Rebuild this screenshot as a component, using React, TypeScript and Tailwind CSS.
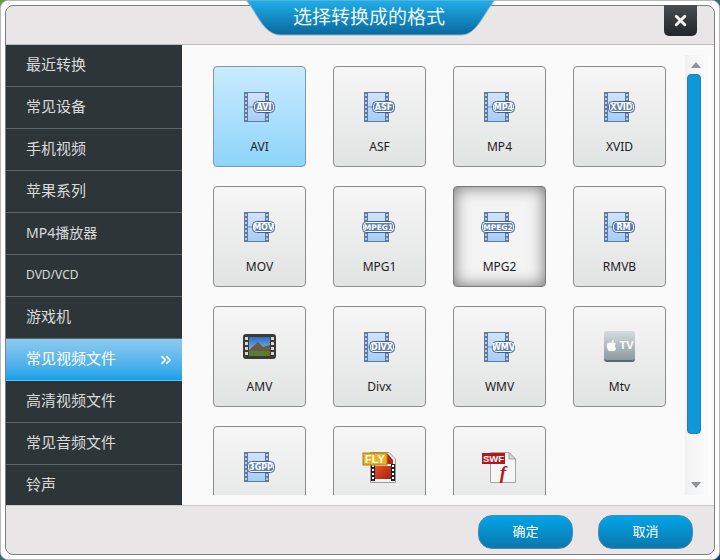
import { ChevronsRight, X } from 'lucide-react'
import { FaApple } from 'react-icons/fa'
import type { ReactNode } from 'react'

const categories = [
  '最近转换',
  '常见设备',
  '手机视频',
  '苹果系列',
  'MP4播放器',
  'DVD/VCD',
  '游戏机',
  '常见视频文件',
  '高清视频文件',
  '常见音频文件',
  '铃声',
]

// badge width comes from the picture, tag is what's printed on the film icon
function FilmIcon({ tag, width }: { tag: string; width: number }) {
  const x = 35 - width
  const holes = [2, 6, 10, 14, 18, 22, 26]
  return (
    <svg width="40" height="32" viewBox="0 0 40 32">
      <defs>
        <linearGradient id="film" x1="0" y1="0" x2="0" y2="1">
          <stop offset="0" stopColor="#d3e3fa" />
          <stop offset="1" stopColor="#a6cdf6" />
        </linearGradient>
      </defs>
      <rect x="4" y="1" width="25" height="30" fill="#5f7ba3" />
      <rect x="8" y="2" width="17" height="28" fill="url(#film)" />
      <line x1="8" y1="16" x2="25" y2="16" stroke="#6f8fbd" />
      {holes.map((y) => (
        <g key={y} fill="#b9c9e0">
          <rect x="5" y={y + 1} width="2" height="2" />
          <rect x="26" y={y + 1} width="2" height="2" />
        </g>
      ))}
      <rect x={x + 0.5} y="10.5" width={width - 1} height="11" rx="4" fill="#fff" stroke="#3f6199" />
      <rect x={x + 2} y="12" width={width - 4} height="8" rx="2.5" fill="#5f7fb3" />
      <text
        x={x + width / 2}
        y="19"
        textAnchor="middle"
        fontSize={tag.length > 4 ? 7.5 : 8}
        fontWeight="700"
        fill="#fff"
        className="font-['DejaVu_Sans',sans-serif]"
      >
        {tag}
      </text>
    </svg>
  )
}

function AmvIcon() {
  const holes = [6, 11, 16, 21]
  return (
    <svg width="40" height="32" viewBox="0 0 40 32">
      <defs>
        <linearGradient id="sky" x1="0" y1="0" x2="0" y2="1">
          <stop offset="0" stopColor="#2a6fc0" />
          <stop offset="1" stopColor="#a9d0ea" />
        </linearGradient>
      </defs>
      <rect x="3" y="3" width="33" height="25" rx="3" fill="#3d3a35" />
      <rect x="9" y="6" width="21" height="19" fill="url(#sky)" />
      <path d="M9 19 L18 11 L23 16 L30 14 V20 H9 Z" fill="#6a5a48" />
      <rect x="9" y="20" width="21" height="5" fill="#5b7d32" />
      {holes.map((y) => (
        <g key={y} fill="#d8d8d8">
          <rect x="5" y={y} width="3" height="3" />
          <rect x="31" y={y} width="3" height="3" />
        </g>
      ))}
    </svg>
  )
}

function FlvIcon() {
  return (
    <svg width="40" height="32" viewBox="0 0 40 32">
      <defs>
        <linearGradient id="flv" x1="0" y1="0" x2="1" y2="1">
          <stop offset="0" stopColor="#e8552c" />
          <stop offset="1" stopColor="#a81e10" />
        </linearGradient>
      </defs>
      <path d="M10.5 1.5 H29 L35.5 8 V31.5 H10.5 Z" fill="#f4f4f4" stroke="#9a9a9a" />
      <path d="M14 3 H28 L33 9 V13 H14 Z" fill="#b8261a" />
      <rect x="15" y="15" width="16" height="13" fill="url(#flv)" />
      <rect x="11" y="13" width="4" height="17" fill="#222" />
      <rect x="31" y="13" width="4" height="17" fill="#222" />
      {[14, 18, 22, 26].map((y) => (
        <g key={y} fill="#fff">
          <rect x="12" y={y} width="2" height="2" />
          <rect x="32" y={y} width="2" height="2" />
        </g>
      ))}
      <rect x="3" y="2" width="24" height="12" fill="#eab21c" stroke="#b07d10" />
      <text x="15" y="12" textAnchor="middle" fontSize="11" fontWeight="700" fill="#fff" className="font-['Liberation_Sans',sans-serif]">
        FLY
      </text>
    </svg>
  )
}

function SwfIcon() {
  return (
    <svg width="40" height="32" viewBox="0 0 40 32">
      <path d="M10.5 1.5 H29 L35.5 8 V31.5 H10.5 Z" fill="#f6f6f6" stroke="#a5a5a5" />
      <path d="M29 1.5 V8 H35.5 Z" fill="#d8d8d8" stroke="#a5a5a5" />
      <rect x="2" y="2" width="23" height="11" fill="#b4161e" />
      <text x="13.5" y="11" textAnchor="middle" fontSize="9.5" fontWeight="700" fill="#fff" className="font-['Liberation_Sans',sans-serif]">
        SWF
      </text>
      <text x="23" y="28" textAnchor="middle" fontSize="19" fontWeight="700" fontStyle="italic" fill="#b4161e" className="font-['Liberation_Serif',serif]">
        f
      </text>
    </svg>
  )
}

function AppleTvIcon() {
  return (
    <div className="flex h-[32px] w-[40px] justify-center">
      <div className="flex h-[31px] w-[31px] items-center justify-center gap-px rounded-[3px] border-b-2 border-[#5c6a70] bg-gradient-to-b from-[#d6dcdf] to-[#8c9aa0] text-white">
        <FaApple className="h-[13px] w-[13px]" />
        <span className="font-['Liberation_Sans',sans-serif] text-[11px] font-bold">TV</span>
      </div>
    </div>
  )
}

// the last row is cut off by the panel before its captions start
const formats: { id: string; label?: string; icon: ReactNode; state?: 'selected' | 'hover' }[] = [
  { id: 'avi', label: 'AVI', icon: <FilmIcon tag="AVI" width={22} />, state: 'selected' },
  { id: 'asf', label: 'ASF', icon: <FilmIcon tag="ASF" width={23} /> },
  { id: 'mp4', label: 'MP4', icon: <FilmIcon tag="MP4" width={23} /> },
  { id: 'xvid', label: 'XVID', icon: <FilmIcon tag="XVID" width={27} /> },
  { id: 'mov', label: 'MOV', icon: <FilmIcon tag="MOV" width={23} /> },
  { id: 'mpg1', label: 'MPG1', icon: <FilmIcon tag="MPEG1" width={33} /> },
  { id: 'mpg2', label: 'MPG2', icon: <FilmIcon tag="MPEG2" width={34} />, state: 'hover' },
  { id: 'rmvb', label: 'RMVB', icon: <FilmIcon tag="RM" width={23} /> },
  { id: 'amv', label: 'AMV', icon: <AmvIcon /> },
  { id: 'divx', label: 'Divx', icon: <FilmIcon tag="DIVX" width={26} /> },
  { id: 'wmv', label: 'WMV', icon: <FilmIcon tag="WMV" width={23} /> },
  { id: 'mtv', label: 'Mtv', icon: <AppleTvIcon /> },
  { id: '3gp', icon: <FilmIcon tag="3GPP" width={28} /> },
  { id: 'flv', icon: <FlvIcon /> },
  { id: 'swf', icon: <SwfIcon /> },
]

function FormatTile({ label, icon, state }: (typeof formats)[number]) {
  let look = 'border-[#8c8c8c] bg-gradient-to-b from-[#f6f6f6] to-[#e2e3e3]'
  if (state === 'selected') look = 'border-[#7d98ab] bg-gradient-to-b from-[#c9ebfe] to-[#8dd4fa]'
  if (state === 'hover') look = 'border-[#777777] bg-[#f4f4f4] shadow-[inset_0_0_16px_#6f6f6f]'
  return (
    <div className={`flex h-[101px] w-[93px] flex-col items-center rounded-[4px] border pt-[24px] ${look}`}>
      {icon}
      {label && <span className="mt-[16px] text-[12px] leading-[16px] text-[#1c1c1c]">{label}</span>}
    </div>
  )
}

function Scrollbar() {
  return (
    <div className="mt-[10px] flex w-[26px] flex-col bg-gradient-to-r from-[#f1f1f1] to-[#fdfdfd] pl-[2px]">
      <div className="mt-[7px] ml-[4px] h-0 w-0 border-x-[5px] border-b-[6px] border-x-transparent border-b-[#8f9498]" />
      <div className="mt-[6px] h-[360px] w-[14px] rounded-[4px] border border-[#2b7cad] bg-[#0f98d9]" />
      <div className="mt-[48px] ml-[4px] h-0 w-0 border-x-[5px] border-t-[6px] border-x-transparent border-t-[#8f9498]" />
    </div>
  )
}

function rowTextSize(name: string) {
  if (name === 'DVD/VCD') return 'text-[12px]'
  if (name === 'MP4播放器') return 'text-[14px]'
  return 'text-[15px]'
}

export default function App() {
  return (
    <div className="h-[560px] w-[720px] bg-gradient-to-br from-[#6d9a3a] to-[#123a7a] font-['Noto_Sans','Noto_Sans_CJK_SC',sans-serif]">
      <div className="relative h-full w-full rounded-[8px] border border-[#b8b8b8] bg-white p-[4px]">
        <div className="flex h-full flex-col overflow-hidden rounded-[8px] border border-[#7f7f7f] bg-[#e8e6e6]">
          <div className="h-[39px] shrink-0 border-b border-[#bdbdbd]" />

          <div className="flex h-[460px] shrink-0">
            <nav className="flex h-[460px] w-[176px] shrink-0 flex-col overflow-hidden bg-[#2e3539]">
              {categories.map((name) => {
                const active = name === '常见视频文件'
                return (
                  <div
                    key={name}
                    className={`flex h-[42px] shrink-0 items-center justify-between border-b pr-[8px] pb-[2px] pl-[20px] ${rowTextSize(name)} ${
                      active
                        ? 'border-[#6fbbe2] bg-gradient-to-b from-[#8ccbee] to-[#08a2ea] text-white'
                        : 'border-[#5e6569] text-[#d8dada]'
                    }`}
                  >
                    {name}
                    {active && <ChevronsRight className="mt-[3px] h-[16px] w-[16px] text-white" strokeWidth={2.5} />}
                  </div>
                )
              })}
            </nav>

            <main className="flex min-w-0 flex-1 bg-[#fafafa] pb-[10px]">
              <div className="h-[450px] w-[503px] shrink-0 overflow-hidden pt-[21px] pl-[31px]">
                <div className="grid grid-cols-[repeat(4,93px)] gap-x-[27px] gap-y-[19px]">
                  {formats.map(({ id, ...format }) => (
                    <FormatTile key={id} id={id} {...format} />
                  ))}
                </div>
              </div>
              <Scrollbar />
            </main>
          </div>

          <footer className="flex flex-1 items-start justify-end gap-[25px] border-t border-[#c9c9c9] pt-[9px] pr-[21px]">
            {['确定', '取消'].map((label) => (
              <button
                key={label}
                className="h-[34px] w-[95px] rounded-[14px] border border-[#4f88a9] bg-gradient-to-b from-[#00a5e8] to-[#0a78ad] text-[13px] text-white"
              >
                {label}
              </button>
            ))}
          </footer>
        </div>

        {/* title tab hangs over the dialog's top edge */}
        <div className="absolute top-[-1px] left-[244px] flex h-[37px] w-[252px] items-center justify-center pr-[4px] pb-[2px]">
          <svg className="absolute inset-0" width="252" height="37" viewBox="0 0 252 37">
            <defs>
              <linearGradient id="tab" x1="0" y1="0" x2="0" y2="1">
                <stop offset="0" stopColor="#20aeea" />
                <stop offset="1" stopColor="#0a689c" />
              </linearGradient>
            </defs>
            <path d="M1 0 C12 12 18 35 36 35 H216 C232 35 238 14 250 0 Z" fill="url(#tab)" stroke="#8fb6c8" />
          </svg>
          <span className="relative text-[19px] text-[#eef8fd]">选择转换成的格式</span>
        </div>

        <button className="absolute top-[4px] left-[663px] flex h-[31px] w-[33px] items-center justify-center rounded-b-[5px] bg-gradient-to-b from-[#4a4d50] to-[#22262a] text-white">
          <X className="h-[17px] w-[17px]" strokeWidth={4} />
        </button>
      </div>
    </div>
  )
}
